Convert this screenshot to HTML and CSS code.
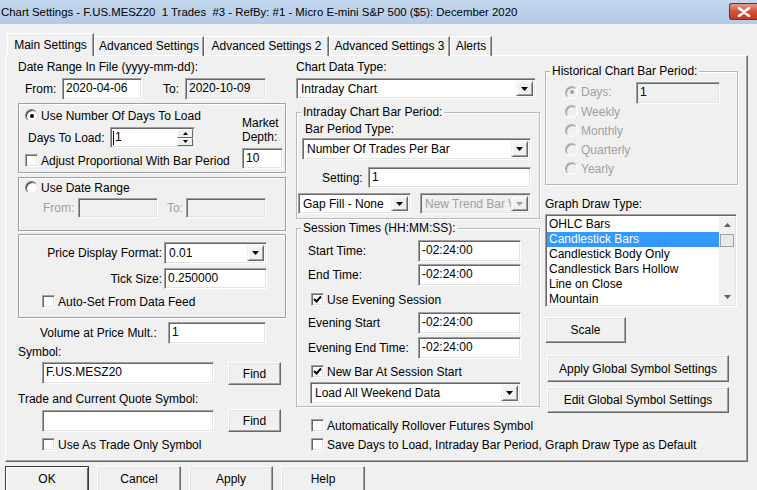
FILE: index.html
```html
<!DOCTYPE html>
<html>
<head>
	<title>Chart Settings</title>
	<link rel="stylesheet" href="styles.css">
</head>
<body>
	<!-- window caption -->
	<div class="titlebar">
		<span class="title">Chart Settings - F.US.MESZ20&nbsp; 1 Trades&nbsp; #3 - RefBy: #1 - Micro E-mini S&amp;P 500 ($5): December 2020</span>
		<div class="close">
			<svg width="14" height="10" viewBox="0 0 14 10"><path d="M2 1 L12 9 M12 1 L2 9" stroke="#fff" stroke-width="2.6" stroke-linecap="round"/></svg>
		</div>
	</div>
	<!-- tabs -->
	<div class="tabs">
		<div class="tab active t-main">Main Settings</div>
		<div class="tab t-adv">Advanced Settings</div>
		<div class="tab t-adv2">Advanced Settings 2</div>
		<div class="tab t-adv3">Advanced Settings 3</div>
		<div class="tab t-alerts">Alerts</div>
	</div>
	<div class="panel">
		<!-- left column -->
		<div class="col col-left">
			<div class="lbl">Date Range In File (yyyy-mm-dd):</div>
			<div class="row range-row">
				<span class="from-lbl">From:</span>
				<div class="edit w80">2020-04-06</div>
				<span class="to-lbl">To:</span>
				<div class="edit w81 disabled">2020-10-09</div>
			</div>
			<div class="grp grp-days">
				<div class="days-main">
					<div class="opt"><span class="radio on"></span>Use Number Of Days To Load</div>
					<div class="row days-row">
						<span class="days-lbl">Days To Load:</span>
						<div class="edit spin">
							<span class="spin-text"><span class="caret"></span>1</span>
							<span class="spin-btns">
								<span class="spin-btn"><svg width="5" height="3" viewBox="0 0 5 3"><polygon points="0,3 5,3 2.5,0" fill="#000"/></svg></span>
								<span class="spin-btn"><svg width="5" height="3" viewBox="0 0 5 3"><polygon points="0,0 5,0 2.5,3" fill="#000"/></svg></span>
							</span>
						</div>
					</div>
					<div class="opt adjust"><span class="check"></span>Adjust Proportional With Bar Period</div>
				</div>
				<div class="depth">
					<div class="depth-lbl">Market<br>Depth:</div>
					<div class="edit depth-edit">10</div>
				</div>
			</div>
			<div class="grp grp-range">
				<div class="opt"><span class="radio"></span>Use Date Range</div>
				<div class="row range2-row">
					<span class="from2-lbl">From:</span>
					<div class="edit w80 disabled"></div>
					<span class="to2-lbl">To:</span>
					<div class="edit w80 disabled"></div>
				</div>
			</div>
			<div class="grp grp-price">
				<div class="row price-row">
					<span class="price-lbl">Price Display Format:</span>
					<div class="combo price-combo"><span class="combo-text">0.01</span><span class="arrow"><svg width="7" height="4" viewBox="0 0 7 4"><polygon points="0,0 7,0 3.5,4" fill="#000"/></svg></span></div>
				</div>
				<div class="row tick-row">
					<span class="price-lbl">Tick Size:</span>
					<div class="edit tick-edit">0.250000</div>
				</div>
				<div class="opt auto-set"><span class="check"></span>Auto-Set From Data Feed</div>
			</div>
			<div class="row vol-row">
				<span class="vol-lbl">Volume at Price Mult.:</span>
				<div class="edit vol-edit">1</div>
			</div>
			<div class="lbl sym-lbl">Symbol:</div>
			<div class="row sym-row">
				<div class="edit sym-edit">F.US.MESZ20</div>
				<div class="btn find-btn">Find</div>
			</div>
			<div class="lbl trade-lbl">Trade and Current Quote Symbol:</div>
			<div class="row trade-row">
				<div class="edit sym-edit trade-edit"></div>
				<div class="btn find-btn">Find</div>
			</div>
			<div class="opt trade-only"><span class="check"></span>Use As Trade Only Symbol</div>
		</div>

		<!-- middle column -->
		<div class="col col-mid">
			<div class="lbl">Chart Data Type:</div>
			<div class="combo data-combo"><span class="combo-text">Intraday Chart</span><span class="arrow"><svg width="7" height="4" viewBox="0 0 7 4"><polygon points="0,0 7,0 3.5,4" fill="#000"/></svg></span></div>
			<div class="fs fs-intraday">
				<span class="legend">Intraday Chart Bar Period:</span>
				<div class="lbl bpt-lbl">Bar Period Type:</div>
				<div class="combo bpt-combo"><span class="combo-text">Number Of Trades Per Bar</span><span class="arrow"><svg width="7" height="4" viewBox="0 0 7 4"><polygon points="0,0 7,0 3.5,4" fill="#000"/></svg></span></div>
				<div class="row setting-row">
					<span class="setting-lbl">Setting:</span>
					<div class="edit setting-edit">1</div>
				</div>
				<div class="row gap-row">
					<div class="combo gap-combo"><span class="combo-text">Gap Fill - None</span><span class="arrow"><svg width="7" height="4" viewBox="0 0 7 4"><polygon points="0,0 7,0 3.5,4" fill="#000"/></svg></span></div>
					<div class="combo trend-combo disabled"><span class="combo-text">New Trend Bar W</span><span class="arrow"><svg width="7" height="4" viewBox="0 0 7 4"><polygon points="0,0 7,0 3.5,4" fill="#a0a0a0"/></svg></span></div>
				</div>
			</div>
			<div class="fs fs-session">
				<span class="legend">Session Times (HH:MM:SS):</span>
				<div class="row time-row first">
					<span class="time-lbl">Start Time:</span>
					<div class="edit time-edit">-02:24:00</div>
				</div>
				<div class="row time-row">
					<span class="time-lbl">End Time:</span>
					<div class="edit time-edit">-02:24:00</div>
				</div>
				<div class="opt evening-chk"><span class="check on"><svg width="11" height="11" viewBox="0 0 11 11"><polyline points="2,5 4.5,7.5 9,2.5" fill="none" stroke="#000" stroke-width="2"/></svg></span>Use Evening Session</div>
				<div class="row time-row ev-start">
					<span class="time-lbl">Evening Start</span>
					<div class="edit time-edit">-02:24:00</div>
				</div>
				<div class="row time-row ev-end">
					<span class="time-lbl">Evening End Time:</span>
					<div class="edit time-edit">-02:24:00</div>
				</div>
				<div class="opt newbar-chk"><span class="check on"><svg width="11" height="11" viewBox="0 0 11 11"><polyline points="2,5 4.5,7.5 9,2.5" fill="none" stroke="#000" stroke-width="2"/></svg></span>New Bar At Session Start</div>
				<div class="combo weekend-combo"><span class="combo-text">Load All Weekend Data</span><span class="arrow"><svg width="7" height="4" viewBox="0 0 7 4"><polygon points="0,0 7,0 3.5,4" fill="#000"/></svg></span></div>
			</div>
			<div class="opt rollover-chk"><span class="check"></span>Automatically Rollover Futures Symbol</div>
			<div class="opt save-chk"><span class="check"></span>Save Days to Load, Intraday Bar Period, Graph Draw Type as Default</div>
		</div>

		<!-- right column -->
		<div class="col col-right">
			<div class="fs fs-hist">
				<span class="legend">Historical Chart Bar Period:</span>
				<div class="row hist-days">
					<div class="opt hist-opt dim"><span class="radio on dim"></span>Days:</div>
					<div class="edit hist-edit disabled">1</div>
				</div>
				<div class="opt hist-opt dim"><span class="radio dim"></span>Weekly</div>
				<div class="opt hist-opt dim"><span class="radio dim"></span>Monthly</div>
				<div class="opt hist-opt dim"><span class="radio dim"></span>Quarterly</div>
				<div class="opt hist-opt dim"><span class="radio dim"></span>Yearly</div>
			</div>
			<div class="lbl gdt-lbl">Graph Draw Type:</div>
			<div class="edit listbox">
				<div class="items">
					<div class="item">OHLC Bars</div>
					<div class="item sel">Candlestick Bars</div>
					<div class="item">Candlestick Body Only</div>
					<div class="item">Candlestick Bars Hollow</div>
					<div class="item">Line on Close</div>
					<div class="item">Mountain</div>
				</div>
				<div class="scrollbar">
					<span class="sb-arrow"><svg width="7" height="4" viewBox="0 0 7 4"><polygon points="0,4 7,4 3.5,0" fill="#606060"/></svg></span>
					<span class="sb-track"><span class="sb-thumb"></span></span>
					<span class="sb-arrow"><svg width="7" height="4" viewBox="0 0 7 4"><polygon points="0,0 7,0 3.5,4" fill="#606060"/></svg></span>
				</div>
			</div>
			<div class="btn scale-btn">Scale</div>
			<div class="btn global-btn apply-global">Apply Global Symbol Settings</div>
			<div class="btn global-btn edit-global">Edit Global Symbol Settings</div>
		</div>
	</div>
	<!-- dialog buttons -->
	<div class="buttons">
		<div class="btn dlg-btn default">OK</div>
		<div class="btn dlg-btn">Cancel</div>
		<div class="btn dlg-btn">Apply</div>
		<div class="btn dlg-btn">Help</div>
	</div>
</body>
</html>
```

FILE: styles.css
```css
body{
	margin: 0;
	background: #f0f0f0;
	font-family: "Liberation Sans", Arial, sans-serif;
	font-size: 12px;
	color: #000;
	width: 757px;
	height: 490px;
	overflow: hidden;
}
.titlebar{
	height: 24px;
	display: flex;
	align-items: center;
	justify-content: space-between;
	background: linear-gradient(#c3d7ed, #b4cbe6);
}
.title{
	font-size: 11.4px;
	padding-left: 1px;
	white-space: nowrap;
}
.close{
	width: 28px;
	height: 17px;
	margin-top: -1px;
	box-sizing: border-box;
	border: 1px solid #7a2a20;
	border-right: none;
	border-radius: 3px 0 0 3px;
	background: linear-gradient(#e79b8c, #d2523c 50%, #c23a22);
	display: flex;
	align-items: center;
	justify-content: center;
}

/* tabs */
.tabs{
	display: flex;
	align-items: flex-end;
	height: 23px;
	margin-top: 9px;
	padding-left: 7px;
	margin-bottom: -1px;
}
.tab{
	height: 20px;
	line-height: 19px;
	box-sizing: border-box;
	text-align: center;
	border-top: 1px solid #fff;
	border-left: 1px solid #fff;
	border-right: 1px solid #696969;
	box-shadow: inset -1px 0 #a0a0a0;
	white-space: nowrap;
}
.tab.active{
	height: 23px;
	line-height: 22px;
	background: #f0f0f0;
	position: relative;
	z-index: 1;
}
.t-main{ width: 87px; }
.t-adv{ width: 110px; }
.t-adv2{ width: 125px; }
.t-adv3{ width: 121px; }
.t-alerts{ width: 42px; }
.panel{
	display: flex;
	margin-left: 5px;
	width: 743px;
	height: 407px;
	box-sizing: border-box;
	border: 1px solid;
	border-color: #fff #696969 #696969 #fff;
	box-shadow: inset -1px -1px #a0a0a0;
	padding: 4px 0 0 12px;
}
.col{
	display: flex;
	flex-direction: column;
}
.col-left{ width: 268px; }
.col-mid{ width: 244px; margin-left: 10px; }
.col-right{ width: 193px; margin-left: 5px; }

/* generic controls */
.lbl{
	height: 15px;
	line-height: 15px;
	white-space: nowrap;
}
.row{
	display: flex;
	align-items: flex-start;
	white-space: nowrap;
}
.row > span{
	align-self: center;
}
.edit{
	box-sizing: border-box;
	height: 22px;
	line-height: 19px;
	padding: 0 3px;
	background: #fff;
	border: 1px solid;
	border-color: #a0a0a0 #fff #fff #a0a0a0;
	box-shadow: inset 1px 1px #696969, inset -1px -1px #e3e3e3;
	white-space: nowrap;
	overflow: hidden;
}
.edit.disabled{
	background: #f0f0f0;
}
.combo{
	box-sizing: border-box;
	height: 22px;
	display: flex;
	background: #fff;
	border: 1px solid;
	border-color: #a0a0a0 #fff #fff #a0a0a0;
	box-shadow: inset 1px 1px #696969, inset -1px -1px #e3e3e3;
	padding: 2px;
}
.combo-text{
	flex: 1;
	line-height: 17px;
	padding-left: 2px;
	white-space: nowrap;
	overflow: hidden;
}
.combo.disabled{
	background: #f0f0f0;
	color: #a0a0a0;
}
.arrow{
	width: 17px;
	box-sizing: border-box;
	display: flex;
	align-items: center;
	justify-content: center;
	background: #f0f0f0;
	border: 1px solid;
	border-color: #f0f0f0 #696969 #696969 #f0f0f0;
	box-shadow: inset 1px 1px #fff, inset -1px -1px #a0a0a0;
}
.btn{
	box-sizing: border-box;
	display: flex;
	align-items: center;
	justify-content: center;
	background: #f0f0f0;
	border: 1px solid;
	border-color: #fff #696969 #696969 #fff;
	box-shadow: inset -1px -1px #a0a0a0, inset 1px 1px #e3e3e3;
	white-space: nowrap;
}
.opt{
	display: flex;
	align-items: center;
	height: 15px;
	white-space: nowrap;
}
.check, .radio{
	width: 13px;
	height: 13px;
	box-sizing: border-box;
	margin-right: 3px;
	background: #fff;
	display: flex;
	align-items: center;
	justify-content: center;
	flex-shrink: 0;
}
.check{
	border: 1px solid;
	border-color: #a0a0a0 #fff #fff #a0a0a0;
	box-shadow: inset 1px 1px #696969, inset -1px -1px #e3e3e3;
}
.radio{
	border-radius: 50%;
	border: 1px solid;
	border-color: #808080 #e3e3e3 #e3e3e3 #808080;
	box-shadow: inset 1px 1px #404040;
}
.radio.on::after{
	content: "";
	width: 4px;
	height: 4px;
	border-radius: 50%;
	background: #000;
}
.radio.dim{
	background: #f0f0f0;
	border-color: #b0b0b0 #fff #fff #b0b0b0;
	box-shadow: inset 1px 1px #a0a0a0;
}
.radio.dim.on::after{
	background: #a0a0a0;
}
.dim{
	color: #a0a0a0;
}
/* group frame with caption sitting on its top edge */
.fs{
	box-sizing: border-box;
	display: flex;
	flex-direction: column;
	border: 1px solid #b9b9b9;
	box-shadow: inset 1px 1px #fff, 1px 1px #fff;
}
.legend{
	align-self: flex-start;
	height: 15px;
	line-height: 15px;
	margin: -8px 0 0 4px;
	padding: 0 2px;
	background: #f0f0f0;
	white-space: nowrap;
}
.grp{
	box-sizing: border-box;
	border: 1px solid #a0a0a0;
	box-shadow: inset 1px 1px #fff, 1px 1px #fff;
}

/* left column */
.range-row{ margin-top: 3px; height: 22px; }
.from-lbl{ margin-left: 7px; width: 37px; }
.to-lbl{ margin-left: 21px; width: 22px; }
.w80{ width: 80px; }
.w81{ width: 81px; }
.grp-days{
	display: flex;
	margin-top: 3px;
	height: 70px;
	padding-left: 6px;
}
.days-main{
	flex: 1;
	padding-top: 4px;
}
.days-row{ margin-top: 4px; height: 21px; }
.days-lbl{ margin-left: 3px; width: 82px; }
.spin{
	width: 85px;
	height: 21px;
	display: flex;
	padding: 1px 1px 1px 2px;
}
.spin-text{
	flex: 1;
	line-height: 17px;
	display: flex;
	align-items: center;
}
.caret{
	width: 1px;
	height: 14px;
	background: #000;
	margin-right: 1px;
}
.spin-btns{
	width: 16px;
	display: flex;
	flex-direction: column;
}
.spin-btn{
	flex: 1;
	box-sizing: border-box;
	display: flex;
	align-items: center;
	justify-content: center;
	background: #f0f0f0;
	border: 1px solid;
	border-color: #fff #696969 #696969 #fff;
}
.adjust{ margin-top: 5px; }
.depth{
	width: 41px;
	margin-right: 2px;
	padding-top: 12px;
}
.depth-lbl{ line-height: 14px; white-space: nowrap; }
.depth-edit{ margin-top: 4px; height: 21px; width: 41px; }
.grp-range{
	margin-top: 4px;
	height: 54px;
	padding: 2px 0 0 6px;
}
.range2-row{ margin-top: 3px; height: 20px; }
.range2-row .edit{ height: 20px; }
.from2-lbl{ margin-left: 18px; width: 35px; color: #a0a0a0; }
.to2-lbl{ margin-left: 9px; width: 19px; color: #a0a0a0; }
.grp-price{
	margin-top: 3px;
	height: 84px;
	padding-top: 7px;
}
.price-lbl{
	width: 143px;
	text-align: right;
	padding-right: 2px;
}
.price-combo{ width: 103px; }
.tick-row{ margin-top: 4px; }
.tick-edit{ width: 103px; height: 21px; }
.auto-set{ margin-top: 5px; margin-left: 23px; }
.vol-row{ margin-top: 4px; }
.vol-lbl{ margin-left: 22px; width: 128px; }
.vol-edit{ width: 98px; }
.sym-lbl{ margin-top: 1px; }
.sym-row{ margin-top: 2px; height: 23px; }
.sym-edit{ margin-left: 24px; width: 172px; }
.find-btn{ margin-left: 14px; width: 53px; height: 23px; }
.trade-lbl{ margin-top: 7px; }
.trade-row{ margin-top: 2px; height: 23px; }
.trade-edit{ margin-top: 1px; }
.trade-only{ margin-top: 5px; margin-left: 24px; }

/* middle column */
.data-combo{ margin-top: 3px; width: 240px; height: 21px; }
.fs-intraday{ margin-top: 13px; padding: 0 0 4px 0; }
.bpt-lbl{ margin-top: 2px; margin-left: 8px; }
.bpt-combo{ margin-top: 1px; margin-left: 5px; width: 229px; }
.setting-row{ margin-top: 7px; }
.setting-lbl{ margin-left: 25px; width: 46px; }
.setting-edit{ width: 163px; height: 21px; }
.gap-row{ margin-top: 5px; }
.gap-combo{ margin-left: 1px; width: 113px; height: 21px; }
.trend-combo{ margin-left: 9px; width: 111px; height: 21px; }
.fs-session{ margin-top: 9px; padding: 0 0 2px 0; }
.time-row{ margin-top: 2px; }
.time-row.first{ margin-top: 4px; }
.time-lbl{ margin-left: 11px; width: 110px; }
.time-edit{ width: 103px; }
.evening-chk{ margin-top: 6px; margin-left: 14px; }
.ev-start{ margin-top: 5px; }
.ev-end{ margin-top: 3px; }
.newbar-chk{ margin-top: 5px; margin-left: 14px; }
.weekend-combo{ margin-top: 3px; margin-left: 13px; width: 211px; }
.rollover-chk{ margin-top: 11px; margin-left: 15px; }
.save-chk{ margin-top: 4px; margin-left: 15px; }

/* right column */
.fs-hist{ margin-top: 11px; padding: 0 0 6px 0; }
.hist-days{ margin-top: 3px; height: 20px; }
.hist-days .hist-opt{ height: 20px; width: 71px; }
.hist-opt{ margin-left: 19px; height: 19px; }
.hist-edit{ width: 84px; }
.gdt-lbl{ margin-top: 12px; }
.listbox{
	margin-top: 2px;
	width: 192px;
	height: 93px;
	display: flex;
	padding: 2px 1px 0 1px;
	line-height: 15px;
}
.items{
	flex: 1;
	overflow: hidden;
}
.item{
	height: 15px;
	padding-left: 2px;
}
.item.sel{
	background: #3399ff;
	color: #fff;
}
.scrollbar{
	width: 16px;
	display: flex;
	flex-direction: column;
	background: #f0f0f0;
	margin-bottom: 1px;
}
.sb-arrow{
	height: 16px;
	display: flex;
	align-items: center;
	justify-content: center;
}
.sb-track{
	flex: 1;
	padding-top: 1px;
}
.sb-thumb{
	display: block;
	margin: 0 1px;
	height: 13px;
	box-sizing: border-box;
	background: #e8e8e8;
	border: 1px solid #a0a0a0;
}
.scale-btn{ margin-top: 10px; width: 81px; height: 26px; }
.global-btn{ margin-left: 2px; width: 182px; }
.apply-global{ margin-top: 12px; height: 27px; }
.edit-global{ margin-top: 5px; height: 26px; }

/* bottom buttons */
.buttons{
	display: flex;
	gap: 8px;
	margin-top: 4px;
	padding-left: 5px;
}
.dlg-btn{
	width: 84px;
	height: 26px;
}
.dlg-btn.default{
	border-color: #3c3c3c;
	box-shadow: inset 1px 1px #fff, inset -1px -1px #696969;
}
```
